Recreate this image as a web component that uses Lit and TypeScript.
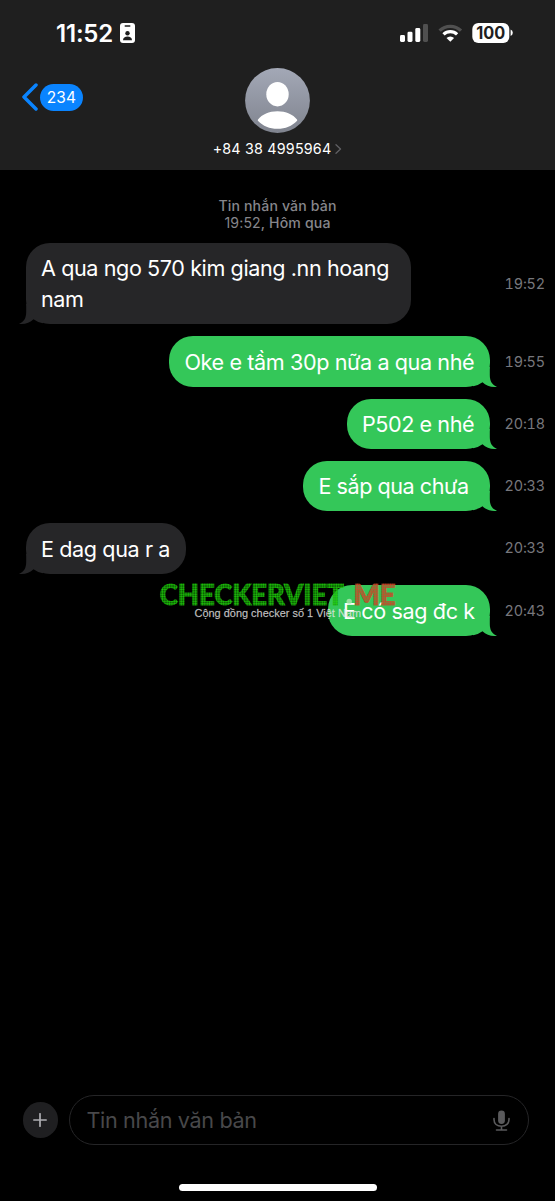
import { LitElement, html, css, svg } from "lit";
import { customElement, property } from "lit/decorators.js";
import { styleMap } from "lit/directives/style-map.js";

interface Message {
  text: string;
  time: string;
  sent: boolean;
  width: number;
  tracking: number;
}

const MESSAGES: Message[] = [
  { text: "A qua ngo 570 kim giang .nn hoang nam", time: "19:52", sent: false, width: 385, tracking: -0.41 },
  { text: "Oke e tầm 30p nữa a qua nhé", time: "19:55", sent: true, width: 321, tracking: -0.4 },
  { text: "P502 e nhé", time: "20:18", sent: true, width: 143.5, tracking: -0.44 },
  { text: "E sắp qua chưa", time: "20:33", sent: true, width: 187, tracking: -0.47 },
  { text: "E dag qua r a", time: "20:33", sent: false, width: 160.5, tracking: -0.4 },
  { text: "E có sag đc k", time: "20:43", sent: true, width: 162.5, tracking: -0.38 },
];

@customElement("message-row")
class MessageRow extends LitElement {
  @property({ attribute: false }) message!: Message;

  static styles = css`
    :host { display: flex; align-items: center; justify-content: space-between; padding: 0 10px 0 25.5px; }
    .track { display: flex; width: 464.5px; }
    .track.sent { justify-content: flex-end; }
    .bubble {
      position: relative; box-sizing: border-box; padding: 10.4px 15.5px 9.1px; border-radius: 24px;
      background: #262628; color: #fff; font-size: 21.6px; line-height: 31px; white-space: nowrap;
    }
    .bubble.wrap { white-space: normal; padding-right: 12px; }
    .bubble.sent { background: #34c759; }
    .text { position: relative; }
    .tail { position: absolute; left: -7px; bottom: 0; width: 24px; height: 20px; fill: #262628; }
    .sent .tail { left: auto; right: -7px; transform: scaleX(-1); fill: #34c759; }
    .time { font-size: 14.4px; letter-spacing: -0.15px; color: #77777c; line-height: 18px; font-variant-numeric: tabular-nums; white-space: nowrap; }
  `;

  render() {
    const m = this.message;
    const side = m.sent ? "sent" : "";
    return html`
      <div class="track ${side}">
        <div class="bubble ${side} ${m.width > 350 ? "wrap" : ""}"
          style=${styleMap({ width: `${m.width}px`, letterSpacing: `${m.tracking}px` })}>
          <svg class="tail" viewBox="0 0 24 20"><path d="M7.2 0V8C7.2 14 5 18 0 19.7C5 20.6 11 18.8 14.5 15.2Q18 18 24 19.2V0Z" /></svg>
          <span class="text">${m.text}</span>
        </div>
      </div>
      <span class="time">${m.time}</span>
    `;
  }
}

@customElement("site-watermark")
class SiteWatermark extends LitElement {
  static styles = css`
    :host { display: block; }
    .mark { display: block; width: 240px; height: 40px; overflow: visible; }
    .title { font-family: Lato, "Liberation Sans", sans-serif; font-weight: 900; font-size: 29px; stroke-width: 0.9px; }
    .sub {
      font-family: "Liberation Sans", Arial, sans-serif; font-size: 11.3px; fill: #e6e6e6; fill-opacity: 0.82;
      stroke: #e6e6e6; stroke-opacity: 0.4; stroke-width: 0.3px;
    }
  `;

  render() {
    const dots = (id: string, base: string, dot: string) => svg`
      <pattern id=${id} width="2.35" height="2.35" patternUnits="userSpaceOnUse">
        <rect width="2.35" height="2.35" fill=${base} fill-opacity="0.5" />
        <circle cx="1.17" cy="1.17" r="0.95" fill=${dot} fill-opacity="0.85" />
      </pattern>`;
    return html`
      <svg class="mark" viewBox="0 0 240 40">
        <defs>${dots("green", "#0a7a00", "#22dc0c")}${dots("red", "#9a5a28", "#e23a26")}</defs>
        <text class="title" x="0.8" y="25.8" textLength="184" lengthAdjust="spacingAndGlyphs" fill="url(#green)" stroke="url(#green)">CHECKERVIET</text>
        <circle cx="190.2" cy="22.5" r="2.7" fill="#b9e8b9" fill-opacity="0.75" />
        <text class="title" x="194.5" y="25.8" textLength="42" lengthAdjust="spacingAndGlyphs" fill="url(#red)" stroke="url(#red)">ME</text>
        <text class="sub" x="35.5" y="37.5" textLength="166.5" lengthAdjust="spacingAndGlyphs">Cộng đồng checker số 1 Việt Nam</text>
      </svg>
    `;
  }
}

@customElement("app-root")
class AppRoot extends LitElement {
  static styles = css`
    :host {
      display: flex; flex-direction: column; position: relative; box-sizing: border-box; width: 555px; height: 1201px;
      overflow: hidden; background: #000; color: #fff; font-family: Inter, "Liberation Sans", sans-serif;
    }
    svg { display: block; }
    .header { height: 169.5px; background: #1f1f1f; flex: none; }
    .status { display: flex; align-items: center; height: 66px; padding: 0 42px 0 56px; box-sizing: border-box; }
    .clock { font-size: 24px; font-weight: 600; line-height: 30px; width: 63.5px; letter-spacing: -0.2px; white-space: nowrap; padding-top: 1px; }
    .indicators { display: flex; align-items: center; margin-left: auto; }
    .nav { display: grid; grid-template-columns: 1fr auto 1fr; align-items: start; padding: 0 22px; }
    .back { display: flex; align-items: center; gap: 2px; padding-top: 17px; }
    .count {
      width: 43px; height: 27px; border-radius: 14px; background: #0a84ff; font-size: 15.5px; letter-spacing: 0.2px;
      line-height: 27px; text-align: center;
    }
    .contact { display: flex; flex-direction: column; align-items: center; gap: 7.5px; padding-top: 1.5px; }
    .number { display: flex; align-items: center; gap: 4px; font-size: 14.3px; line-height: 18px; letter-spacing: 0.2px; white-space: nowrap; }
    .stamp { padding-top: 27.5px; text-align: center; font-size: 14.1px; line-height: 17px; letter-spacing: 0.15px; font-weight: 500; color: #86868b; }
    .plain { font-weight: 400; }
    .thread { display: flex; flex-direction: column; gap: 11.8px; padding-top: 12px; }
    .watermark { position: absolute; left: 158.5px; top: 578.5px; }
    .compose { display: flex; align-items: center; gap: 11px; margin-top: auto; padding: 0 26px 0 22.5px; }
    .plus { display: grid; place-items: center; width: 35.5px; height: 35.5px; border-radius: 50%; background: #1f1f21; flex: none; }
    .field {
      flex: 1; display: flex; align-items: center; justify-content: space-between; box-sizing: border-box; height: 50px;
      border: 1.3px solid #252527; border-radius: 25px; padding: 0 18.5px 0 16.5px;
    }
    .hint { font-size: 21.6px; color: #48484a; letter-spacing: -0.35px; }
    .home { width: 198px; height: 6.5px; border-radius: 4px; background: #fff; margin: 39px auto 10.5px; flex: none; }
  `;

  render() {
    return html`
      <div class="header">
        <div class="status">
          <span class="clock">11:52</span>
          <svg width="15" height="20" viewBox="0 0 15 20">
            <rect width="15" height="20" rx="3" fill="#fff" />
            <rect x="4.5" y="2.3" width="6" height="1.4" rx=".7" fill="#1f1f1f" />
            <circle cx="7.5" cy="10.3" r="2.2" fill="#1f1f1f" />
            <path d="M3 17.3C3 14.7 5 13.6 7.5 13.6S12 14.7 12 17.3Z" fill="#1f1f1f" />
          </svg>
          <div class="indicators">
            <svg width="113" height="22" viewBox="0 0 113 22">
              <rect x="0" y="13" width="5" height="7" rx="1.4" fill="#fff" />
              <rect x="7.5" y="9.7" width="5" height="10.3" rx="1.4" fill="#fff" />
              <rect x="15.3" y="6" width="5" height="14" rx="1.4" fill="#fff" />
              <rect x="23" y="2" width="5" height="18" rx="1.4" fill="#505050" />
              <path d="M39.6 8.6A15.4 15.4 0 0 1 61 8.6" stroke="#505050" stroke-width="3.3" fill="none" />
              <path d="M43.5 12.4A9.8 9.8 0 0 1 57.1 12.4" stroke="#fff" stroke-width="3.2" fill="none" />
              <path d="M50.3 19.8L46.5 16A5.4 5.4 0 0 1 54.1 16Z" fill="#fff" />
              <rect x="72.3" y="1" width="37" height="20" rx="6" fill="#fff" />
              <path d="M110.6 7.5Q112.8 8.5 112.8 10.8T110.6 14Z" fill="#fff" />
              <text x="90.7" y="17" text-anchor="middle" font-family="Inter" font-weight="700" font-size="17" textLength="29" lengthAdjust="spacingAndGlyphs" fill="#1f1f1f">100</text>
            </svg>
          </div>
        </div>
        <div class="nav">
          <div class="back">
            <svg width="16" height="28" viewBox="0 0 16 28"><path d="M14 2L2 14L14 26" fill="none" stroke="#0a84ff" stroke-width="3.5" stroke-linecap="round" stroke-linejoin="round" /></svg>
            <span class="count">234</span>
          </div>
          <div class="contact">
            <svg width="65" height="65" viewBox="0 0 65 65">
              <defs><linearGradient id="avatar" x2="0" y2="1"><stop stop-color="#a3a8b6" /><stop offset="1" stop-color="#80848f" /></linearGradient></defs>
              <circle cx="32.5" cy="32.5" r="32.4" fill="url(#avatar)" />
              <ellipse cx="32.5" cy="26.2" rx="11.2" ry="12.2" fill="#fff" />
              <path d="M13 51.5C17 46.5 24 43.3 32.5 43.3S48 46.5 52 51.5Q52.6 52.2 51.9 53C47 58 40.5 60.8 32.5 60.8S18 58 13.1 53Q12.4 52.2 13 51.5Z" fill="#fff" />
            </svg>
            <div class="number"><span>+84 38 4995964</span>
              <svg width="7" height="10" viewBox="0 0 7 10"><path d="M1 .7L5.5 5L1 9.3" fill="none" stroke="#606064" stroke-width="1.3" stroke-linecap="round" stroke-linejoin="round" /></svg>
            </div>
          </div>
        </div>
      </div>
      <div class="stamp">Tin nhắn văn bản<br /><span class="plain">19:52</span>, Hôm qua</div>
      <div class="thread">${MESSAGES.map((m) => html`<message-row .message=${m}></message-row>`)}</div>
      <site-watermark class="watermark"></site-watermark>
      <div class="compose">
        <div class="plus"><svg width="14" height="14" viewBox="0 0 14 14"><path d="M7 .8V13.2M.8 7H13.2" stroke="#aeaeb2" stroke-width="1.7" stroke-linecap="round" /></svg></div>
        <div class="field">
          <span class="hint">Tin nhắn văn bản</span>
          <svg width="17" height="21" viewBox="0 0 17 21" fill="none" stroke="#5a5a5c" stroke-width="1.6" stroke-linecap="round">
            <rect x="5.1" y=".5" width="6.8" height="13.4" rx="3.4" fill="#5a5a5c" stroke="none" />
            <path d="M1 8.5V9.5C1 13.7 4 16.2 8.5 16.2S16 13.7 16 9.5V8.5M8.5 16.2V20M3.5 20H13.5" />
          </svg>
        </div>
      </div>
      <div class="home"></div>
    `;
  }
}
